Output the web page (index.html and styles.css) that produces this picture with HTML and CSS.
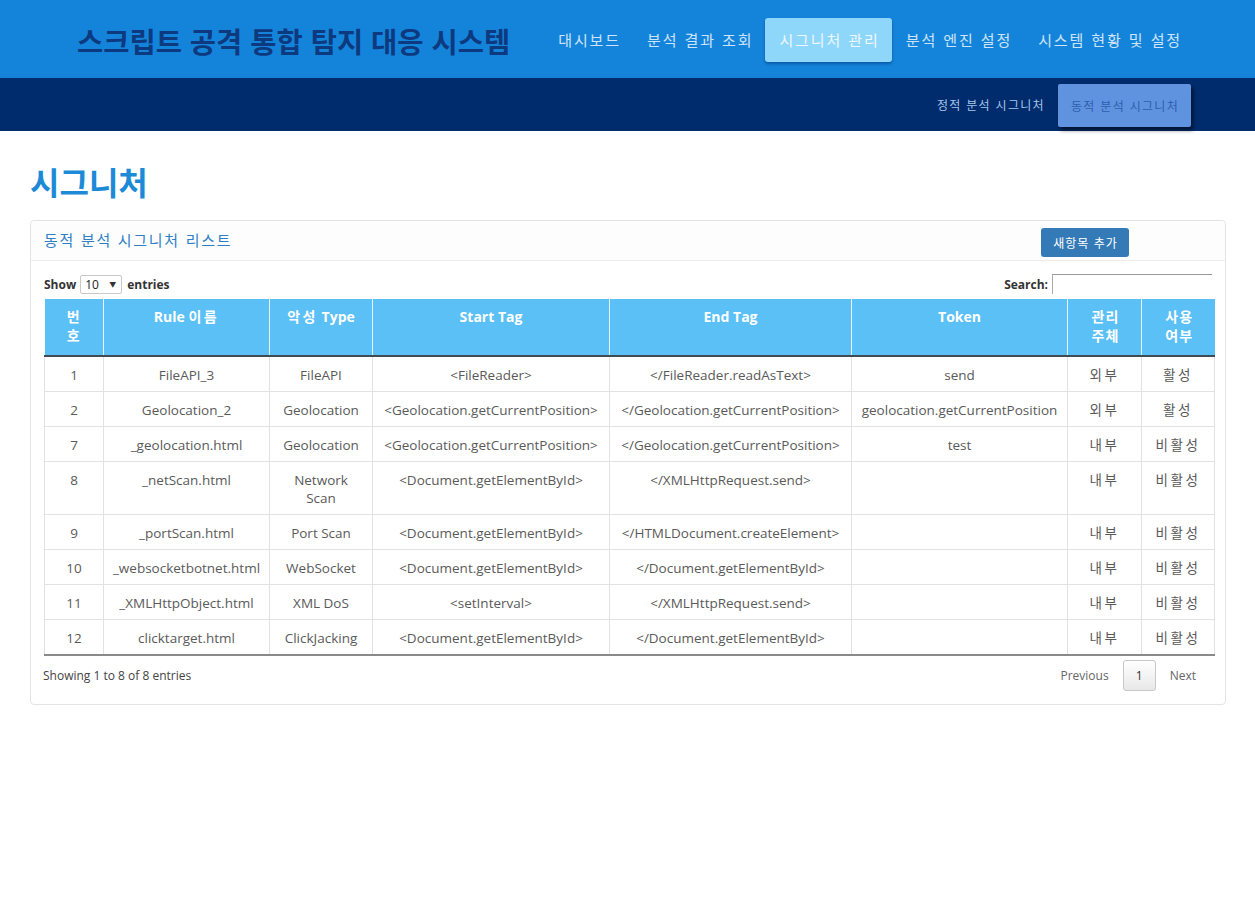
FILE: index.html
```html
<!DOCTYPE html>
<html lang="ko">
<head>
<meta charset="utf-8">
<title>시그니처</title>
<link rel="stylesheet" href="styles.css">
</head>
<body>
<header class="topbar">
  <div class="brand">스크립트 공격 통합 탐지 대응 시스템</div>
  <nav class="mainnav">
    <a class="nav-item">대시보드</a>
    <a class="nav-item">분석 결과 조회</a>
    <a class="nav-item active">시그니처 관리</a>
    <a class="nav-item">분석 엔진 설정</a>
    <a class="nav-item">시스템 현황 및 설정</a>
  </nav>
</header>
<div class="subbar">
  <a class="sub-item">정적 분석 시그니처</a>
  <a class="sub-item active">동적 분석 시그니처</a>
</div>
<main class="content">
  <h1 class="page-title">시그니처</h1>
  <section class="panel">
    <div class="panel-head">
      <span class="panel-title">동적 분석 시그니처 리스트</span>
      <button class="btn-add">새항목 추가</button>
    </div>
    <div class="panel-body">
      <div class="dt-top">
        <label class="dt-length">Show <span class="fake-select">10<span class="caret">▼</span></span> entries</label>
        <label class="dt-search">Search: <span class="fake-input"></span></label>
      </div>
      <table class="grid">
        <colgroup>
          <col class="c1"><col class="c2"><col class="c3"><col class="c4"><col class="c5"><col class="c6"><col class="c7"><col class="c8">
        </colgroup>
        <thead>
          <tr>
            <th class="ko">번호</th><th>Rule <span class="ko">이름</span></th><th><span class="ko">악성</span> Type</th><th>Start Tag</th><th>End Tag</th><th>Token</th><th class="ko">관리 주체</th><th class="ko">사용 여부</th>
          </tr>
        </thead>
        <tbody>
          <tr><td>1</td><td>FileAPI_3</td><td>FileAPI</td><td>&lt;FileReader&gt;</td><td>&lt;/FileReader.readAsText&gt;</td><td>send</td><td class="ko">외부</td><td class="ko">활성</td></tr>
          <tr><td>2</td><td>Geolocation_2</td><td>Geolocation</td><td>&lt;Geolocation.getCurrentPosition&gt;</td><td>&lt;/Geolocation.getCurrentPosition&gt;</td><td>geolocation.getCurrentPosition</td><td class="ko">외부</td><td class="ko">활성</td></tr>
          <tr><td>7</td><td>_geolocation.html</td><td>Geolocation</td><td>&lt;Geolocation.getCurrentPosition&gt;</td><td>&lt;/Geolocation.getCurrentPosition&gt;</td><td>test</td><td class="ko">내부</td><td class="ko">비활성</td></tr>
          <tr><td>8</td><td>_netScan.html</td><td>Network Scan</td><td>&lt;Document.getElementById&gt;</td><td>&lt;/XMLHttpRequest.send&gt;</td><td></td><td class="ko">내부</td><td class="ko">비활성</td></tr>
          <tr><td>9</td><td>_portScan.html</td><td>Port Scan</td><td>&lt;Document.getElementById&gt;</td><td>&lt;/HTMLDocument.createElement&gt;</td><td></td><td class="ko">내부</td><td class="ko">비활성</td></tr>
          <tr><td>10</td><td>_websocketbotnet.html</td><td>WebSocket</td><td>&lt;Document.getElementById&gt;</td><td>&lt;/Document.getElementById&gt;</td><td></td><td class="ko">내부</td><td class="ko">비활성</td></tr>
          <tr><td>11</td><td>_XMLHttpObject.html</td><td>XML DoS</td><td>&lt;setInterval&gt;</td><td>&lt;/XMLHttpRequest.send&gt;</td><td></td><td class="ko">내부</td><td class="ko">비활성</td></tr>
          <tr><td>12</td><td>clicktarget.html</td><td>ClickJacking</td><td>&lt;Document.getElementById&gt;</td><td>&lt;/Document.getElementById&gt;</td><td></td><td class="ko">내부</td><td class="ko">비활성</td></tr>
        </tbody>
      </table>
      <div class="dt-bottom">
        <span class="dt-info">Showing 1 to 8 of 8 entries</span>
        <div class="pager">
          <span class="pg-link">Previous</span>
          <span class="pg-current">1</span>
          <span class="pg-link">Next</span>
        </div>
      </div>
    </div>
  </section>
</main>
</body>
</html>
```

FILE: styles.css
```css
* { box-sizing: border-box; }
body {
  margin: 0;
  font-family: "Open Sans", "Noto Sans CJK KR", sans-serif;
  color: #555;
  background: #fff;
}
.topbar {
  height: 78px;
  background: #1484db;
  display: flex;
  align-items: center;
  padding-left: 77px;
}
.brand {
  font-family: "Noto Sans CJK KR", sans-serif;
  font-weight: 700;
  font-size: 28.5px;
  color: #0d3a7f;
  margin-right: 34px;
  margin-top: 2px;
  white-space: nowrap;
}
.mainnav { display: flex; align-items: center; }
.nav-item {
  font-family: "Noto Sans CJK KR", sans-serif;
  font-size: 15px;
  letter-spacing: 1.9px;
  color: #cfe5f7;
  padding: 0 12px 0 14px;
  height: 44px;
  line-height: 44px;
  margin-top: 2px;
  white-space: nowrap;
}
.nav-item.active {
  background: #8fd6fb;
  color: #eef8ff;
  border-radius: 3px;
  box-shadow: 0 2px 3px rgba(0, 40, 100, 0.45);
}
.subbar {
  height: 53px;
  background: #002c6e;
  display: flex;
  justify-content: flex-end;
  align-items: center;
  padding-right: 64px;
}
.sub-item {
  font-family: "Noto Sans CJK KR", sans-serif;
  font-size: 12px;
  letter-spacing: 1.3px;
  color: #a7c4ea;
  padding: 0 12px 0 13px;
  height: 43px;
  line-height: 43px;
  white-space: nowrap;
}
.sub-item.active {
  background: #5f93e0;
  color: #2d5fae;
  margin-left: 1px;
  margin-top: 2px;
  border-radius: 2px;
  box-shadow: 2px 3px 4px rgba(0, 0, 0, 0.6);
}
.content { padding: 0 29px 0 30px; }
.page-title {
  font-family: "Noto Sans CJK KR", sans-serif;
  font-weight: 700;
  font-size: 32px;
  color: #1d8ad8;
  margin: 28px 0 17px;
  line-height: 44px;
}
.panel {
  border: 1px solid #e4e4e4;
  border-radius: 4px;
  background: #fff;
}
.panel-head {
  height: 40px;
  background: #fdfdfd;
  border-bottom: 1px solid #ececec;
  display: flex;
  align-items: center;
  padding-left: 13px;
  border-radius: 4px 4px 0 0;
}
.panel-title {
  font-family: "Noto Sans CJK KR", sans-serif;
  font-size: 15px;
  letter-spacing: 1.7px;
  color: #2f7fc6;
  flex: 1;
  margin-top: -2px;
}
.btn-add {
  font-family: "Noto Sans CJK KR", sans-serif;
  font-size: 12px;
  letter-spacing: 1px;
  background: #337ab7;
  color: #fff;
  border: none;
  border-radius: 3px;
  height: 29px;
  width: 88px;
  margin: 4px 96px 0 0;
  padding: 0 0 0 1px;
}
.panel-body { padding: 12px 12px 13px 13px; }
.dt-top {
  display: flex;
  justify-content: space-between;
  align-items: center;
  height: 22px;
  margin-bottom: 4px;
}
.dt-length, .dt-search {
  font-size: 12px;
  font-weight: 700;
  color: #333;
  display: flex;
  align-items: center;
}
.fake-select {
  display: inline-flex;
  justify-content: space-between;
  align-items: center;
  width: 42px;
  height: 19px;
  border: 1px solid #c9c9c9;
  border-radius: 2px;
  margin: 0 5px 0 4px;
  padding: 0 5px 0 4px;
  font-weight: 400;
  color: #222;
}
.caret { font-size: 7px; color: #333; }
.fake-input {
  display: inline-block;
  width: 160px;
  height: 20px;
  border-top: 1px solid #999;
  border-left: 1px solid #aaa;
  margin-left: 4px;
  margin-right: 1px;
}
.ko { letter-spacing: 2.5px; }
.grid {
  width: 100%;
  border-collapse: collapse;
  table-layout: fixed;
  font-size: 13.5px;
  line-height: 18px;
}
.c1 { width: 59px; }
.c2 { width: 166px; }
.c3 { width: 103px; }
.c4 { width: 237px; }
.c5 { width: 242px; }
.c6 { width: 216px; }
.c7 { width: 74px; }
.c8 { width: 73px; }
.grid th {
  background: #5bc0f6;
  color: #fff;
  font-size: 14px;
  font-weight: 700;
  line-height: 18.5px;
  padding: 9px 8px 10px;
  vertical-align: top;
  border-left: 1px solid #e6f4fc;
  border-bottom: 2px solid #3f4a54;
}
.grid th.ko { letter-spacing: 1px; }
.grid th:first-child { border-left: none; padding-left: 18px; padding-right: 18px; }
.grid th:nth-child(7), .grid th:nth-child(8) { padding-left: 20px; padding-right: 18px; }
.grid td {
  text-align: center;
  vertical-align: top;
  color: #5a5a5a;
  padding: 9px 8px 7px;
  border: 1px solid #e2e2e2;
  border-top: none;
}
.grid tbody tr:last-child td { border-bottom: 2px solid #8a8a8a; }
.dt-bottom {
  display: flex;
  justify-content: space-between;
  align-items: center;
  margin-top: 4px;
}
.dt-info { font-size: 12px; color: #444; margin-left: -1px; }
.pager { display: flex; align-items: center; font-size: 12px; color: #666; margin-right: 3px; }
.pg-link { padding: 0 14px; }
.pg-current {
  width: 33px;
  height: 31px;
  line-height: 29px;
  text-align: center;
  border: 1px solid #c8c8c8;
  border-radius: 3px;
  background: linear-gradient(#fff, #e8e8e8);
  color: #333;
}
```
